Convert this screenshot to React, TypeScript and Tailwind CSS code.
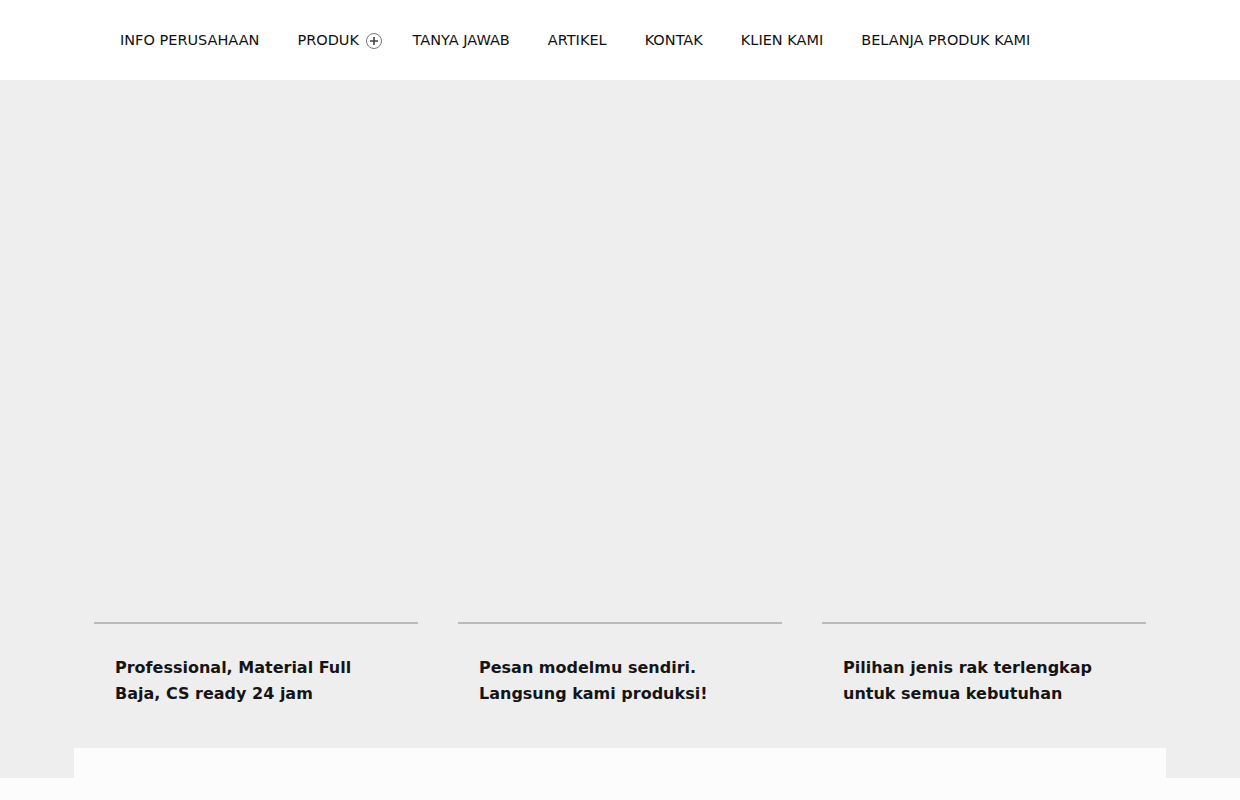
import React from 'react'

const navItems = ['INFO PERUSAHAAN', 'PRODUK', 'TANYA JAWAB', 'ARTIKEL', 'KONTAK', 'KLIEN KAMI', 'BELANJA PRODUK KAMI']

const features = [
  ['Professional, Material Full', 'Baja, CS ready 24 jam'],
  ['Pesan modelmu sendiri.', 'Langsung kami produksi!'],
  ['Pilihan jenis rak terlengkap', 'untuk semua kebutuhan'],
]

function PlusCircle() {
  return (
    <svg width="16" height="16" viewBox="0 0 16 16" fill="none" className="ml-[7px] shrink-0">
      <circle cx="8" cy="8" r="7.5" stroke="#777" strokeWidth="1" />
      <path d="M8 4v8M4 8h8" stroke="#444" strokeWidth="1.6" />
    </svg>
  )
}

export default function App() {
  return (
    <div className="h-[800px] overflow-hidden bg-[#fcfcfc] font-['DejaVu_Sans',sans-serif]">
      {/* Header */}
      <header className="h-20 bg-white pl-[120px] pt-[2px] flex items-center text-[14.5px] text-[#111]">
        {navItems.map((item) => (
          <a
            key={item}
            className={item === 'PRODUK' ? 'flex items-center mr-[30.5px]' : 'flex items-center mr-[38px]'}
          >
            {item}
            {item === 'PRODUK' && <PlusCircle />}
          </a>
        ))}
      </header>

      {/* Hero */}
      <section className="h-[698px] bg-[#eeeeee] flex flex-col justify-end">
        <div className="mx-[94px] mb-[71px] grid grid-cols-3 gap-10">
          {features.map((lines) => (
            <div key={lines[0]} className="border-t-2 border-[#bbbbbb] pt-[31px] pl-[21px]">
              <p className="text-[16px] leading-[26px] font-bold text-[#151515]">
                {lines[0]}
                <br />
                {lines[1]}
              </p>
            </div>
          ))}
        </div>
      </section>

      {/* Content panel */}
      <div className="mx-[74px] -mt-[30px] h-[60px] bg-[#fcfcfc] relative" />
    </div>
  )
}
